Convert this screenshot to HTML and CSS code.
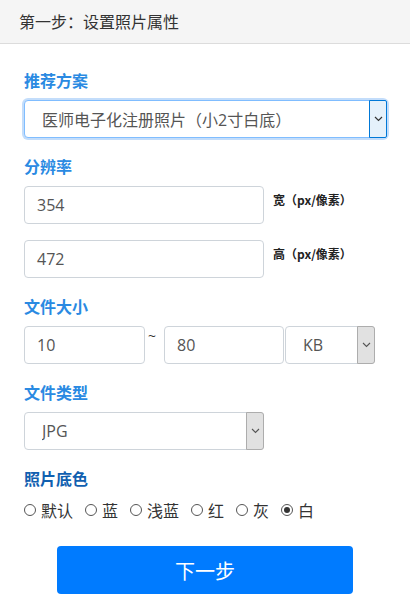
FILE: index.html
```html
<!DOCTYPE html>
<html lang="zh-CN">
<head>
<meta charset="utf-8">
<link rel="stylesheet" href="styles.css">
</head>
<body>
<div class="header">第一步：设置照片属性</div>
<div class="form">
  <div class="label">推荐方案</div>
  <div class="select select-wide focused">
    <span class="select-text">医师电子化注册照片（小2寸白底）</span>
    <span class="arrow"><svg width="9" height="6" viewBox="0 0 9 6"><path d="M1 1 L4.5 4.5 L8 1" fill="none" stroke="#333" stroke-width="1.2"/></svg></span>
  </div>

  <div class="label gap">分辨率</div>
  <div class="res-row">
    <div class="input w240">354</div>
    <div class="unit">宽（px/像素）</div>
  </div>
  <div class="res-row second">
    <div class="input w240">472</div>
    <div class="unit">高（px/像素）</div>
  </div>

  <div class="label gap3">文件大小</div>
  <div class="size-row">
    <div class="input w121">10</div>
    <div class="tilde">~</div>
    <div class="input w120">80</div>
    <div class="select w89">
      <span class="select-text">KB</span>
      <span class="arrow grey"><svg width="9" height="6" viewBox="0 0 9 6"><path d="M1 1 L4.5 4.5 L8 1" fill="none" stroke="#555" stroke-width="1.1"/></svg></span>
    </div>
  </div>

  <div class="label gap">文件类型</div>
  <div class="select w240">
    <span class="select-text">JPG</span>
    <span class="arrow grey"><svg width="9" height="6" viewBox="0 0 9 6"><path d="M1 1 L4.5 4.5 L8 1" fill="none" stroke="#555" stroke-width="1.1"/></svg></span>
  </div>

  <div class="label gap dark">照片底色</div>
  <div class="radios">
    <span class="radio"><span class="dot"></span>默认</span>
    <span class="radio"><span class="dot"></span>蓝</span>
    <span class="radio"><span class="dot"></span>浅蓝</span>
    <span class="radio"><span class="dot"></span>红</span>
    <span class="radio"><span class="dot"></span>灰</span>
    <span class="radio"><span class="dot checked"></span>白</span>
  </div>

  <div class="btn-wrap"><div class="btn">下一步</div></div>
</div>
</body>
</html>
```
FILE: styles.css
```css
* { box-sizing: border-box; }
body {
  margin: 0;
  font-family: "Open Sans", "Noto Sans CJK SC", sans-serif;
  color: #333;
  background: #fff;
}
.header {
  height: 44px;
  line-height: 43px;
  background: #f5f5f5;
  border-bottom: 1px solid #dcdcdc;
  padding-left: 19px;
  font-size: 16px;
  color: #333;
  font-family: "Noto Sans CJK SC", sans-serif;
}
.form {
  padding: 26px 24px 0 24px;
}
.label {
  font-family: "Noto Sans CJK SC", sans-serif;
  font-size: 16px;
  line-height: 20px;
  font-weight: bold;
  color: #2a8ae2;
  margin-bottom: 10px;
}
.label.gap { margin-top: 18px; }
.label.gap3 { margin-top: 18px; }
.label.dark { color: #1160b0; margin-bottom: 12px; }

.input, .select {
  height: 38px;
  border: 1px solid #ced4da;
  border-radius: 4px;
  font-size: 16px;
  color: #555;
  background: #fff;
  display: flex;
  align-items: center;
}
.input { padding-left: 12px; }
.w240 { width: 240px; }
.w121 { width: 121px; }
.w120 { width: 120px; }
.w89 { width: 90px; }

.select { padding-left: 17px; }
.select-text { flex: 1; white-space: nowrap; overflow: hidden; font-family: "Open Sans", "Noto Sans CJK SC", sans-serif; }
.select-wide { width: 363px; }
.select.focused {
  border-color: #80bdff;
  box-shadow: 0 0 0 2px #c3ddfb;
  font-size: 16px;
}
.arrow {
  width: 18px;
  align-self: stretch;
  margin: -1px -1px -1px 0;
  display: flex;
  align-items: center;
  justify-content: center;
  border: 1px solid #adadad;
  background: #e1e1e1;
  border-radius: 0 3px 3px 0;
}
.focused .arrow {
  background: #e5f1fb;
  border-color: #0078d7;
  border-radius: 0 2px 2px 0;
}

.res-row {
  display: flex;
  align-items: flex-start;
}
.res-row.second { margin-top: 16px; }
.unit {
  font-family: "Noto Sans CJK SC", sans-serif;
  font-size: 12px;
  font-weight: bold;
  color: #222;
  margin-left: 9px;
  padding-top: 5px;
}
.size-row {
  display: flex;
  align-items: flex-start;
}
.tilde {
  width: 19px;
  padding-left: 3px;
  font-size: 14px;
  line-height: 16px;
  color: #333;
  padding-top: 2px;
}
.size-row .select { margin-left: 1px; }

.radios {
  display: flex;
  align-items: center;
  font-family: "Noto Sans CJK SC", sans-serif;
  font-size: 16px;
  line-height: 20px;
  color: #333;
}
.radio {
  display: flex;
  align-items: center;
  margin-right: 12px;
}
.dot {
  width: 12px;
  height: 12px;
  border: 1px solid #555;
  border-radius: 50%;
  margin-right: 5px;
  display: flex;
  align-items: center;
  justify-content: center;
}
.dot.checked::after {
  content: "";
  width: 6px;
  height: 6px;
  border-radius: 50%;
  background: #333;
}
.btn-wrap {
  display: flex;
  justify-content: center;
  margin-top: 26px;
}
.btn {
  width: 296px;
  height: 48px;
  background: #007bff;
  border-radius: 4px;
  color: #fff;
  font-family: "Noto Sans CJK SC", sans-serif;
  font-size: 20px;
  display: flex;
  align-items: center;
  justify-content: center;
}
```
